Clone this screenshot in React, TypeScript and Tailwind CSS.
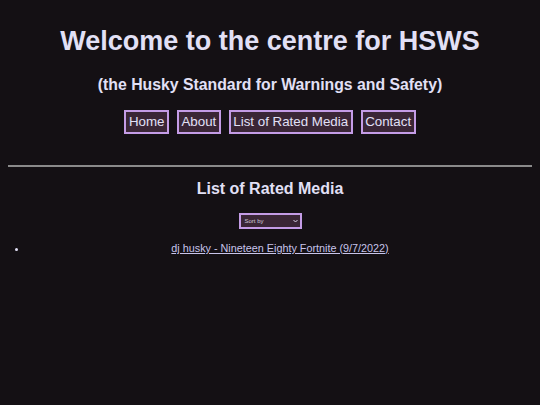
import React from "react";

export default function App() {
  const navs = ["Home", "About", "List of Rated Media", "Contact"];
  return (
    <div className="min-h-[405px] w-full bg-[#141014] text-[#e2e0f6] px-2 pt-[24px]" style={{ fontFamily: '"Liberation Sans", Arial, sans-serif' }}>
      <h1 className="text-center text-[27px] font-bold leading-[34px]">Welcome to the centre for HSWS</h1>
      <h2 className="mt-[16px] text-center text-[15.8px] font-bold leading-[22px]">(the Husky Standard for Warnings and Safety)</h2>
      <nav className="mt-[14px] flex justify-center gap-[8px]">
        {navs.map((n) => (
          <a key={n} className="border-2 border-[#c49ce6] bg-[#3a2636] px-[2.5px] text-[13.33px] leading-[20px] text-[#e2e0f6]">
            {n}
          </a>
        ))}
      </nav>
      <hr className="mt-[31px] border-t-2 border-[#8a8a8a]" />
      <h3 className="mt-[11px] text-center text-[16px] font-bold leading-[22px]">List of Rated Media</h3>
      <div className="mt-[13px] flex justify-center">
        <div className="flex h-[16px] w-[63px] items-center justify-between border-2 border-[#c49ce6] bg-[#3a2636] pl-[4px] pr-[2px] text-[6px] text-[#cfc8da]">
          <span>Sort by</span>
          <svg width="5" height="4" viewBox="0 0 5 4"><path d="M0.5 1 L2.5 3 L4.5 1" stroke="#d8d0e4" strokeWidth="1" fill="none" /></svg>
        </div>
      </div>
      <ul className="mt-[12px] list-disc pl-[8px]">
        <li className="ml-[12px] text-center text-[10.8px] leading-[14px]">
          <a className="text-[#c8c4ea] underline">dj husky - Nineteen Eighty Fortnite (9/7/2022)</a>
        </li>
      </ul>
    </div>
  );
}
